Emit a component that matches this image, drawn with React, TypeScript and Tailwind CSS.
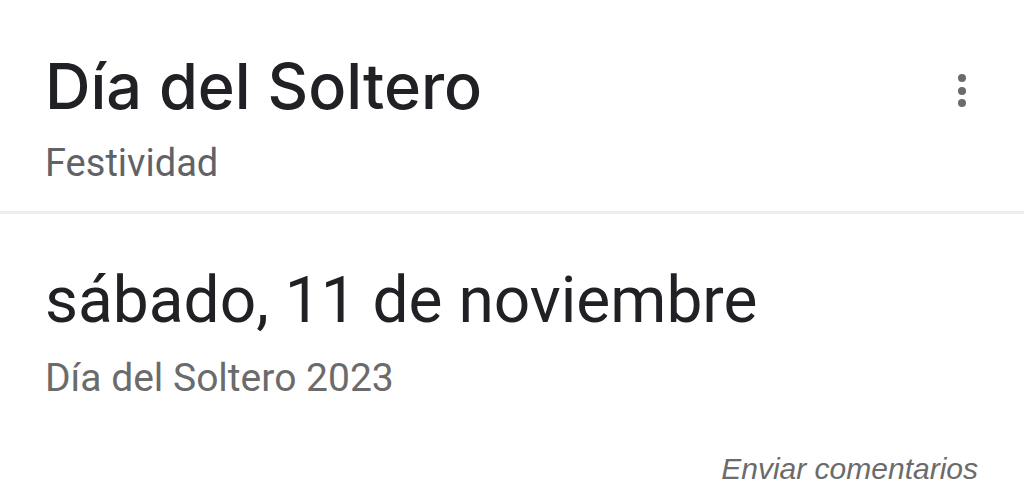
export default function App() {
  return (
    <div className="h-[486px] w-[1024px] overflow-hidden bg-white" style={{ fontFamily: "Roboto, 'Liberation Sans', sans-serif" }}>
      {/* Header: title, type and overflow menu */}
      <div className="flex items-start justify-between pl-[45px] pr-[58px] pt-[50px]">
        <div>
          <h1 className="font-['Inter',sans-serif] text-[63px] leading-[72px] font-medium text-[#202124]">
            Día del Soltero
          </h1>
          <p className="mt-[19px] text-[38px] leading-[44px] text-[#5f6368]">Festividad</p>
        </div>
        <button type="button" aria-label="Más opciones" className="mt-[24px] flex flex-col items-center gap-[4.5px]">
          <span className="h-[8px] w-[8px] rounded-full bg-[#6b6b6b]" />
          <span className="h-[8px] w-[8px] rounded-full bg-[#6b6b6b]" />
          <span className="h-[8px] w-[8px] rounded-full bg-[#6b6b6b]" />
        </button>
      </div>

      <div className="mt-[26px] h-[3px] bg-[#ececec]" />

      {/* Date block */}
      <div className="pl-[45px] pt-[51px]">
        <p className="text-[64px] leading-[72px] text-[#202124]">sábado, 11 de noviembre</p>
        <p className="mt-[19px] text-[39px] leading-[44px] text-[#6b6b6b]">Día del Soltero 2023</p>
      </div>

      <div className="flex justify-end pr-[46px] pt-[54px]">
        <span className="font-['Liberation_Sans',sans-serif] text-[30px] leading-[30px] italic text-[#6b6b6b]">Enviar comentarios</span>
      </div>
    </div>
  );
}
